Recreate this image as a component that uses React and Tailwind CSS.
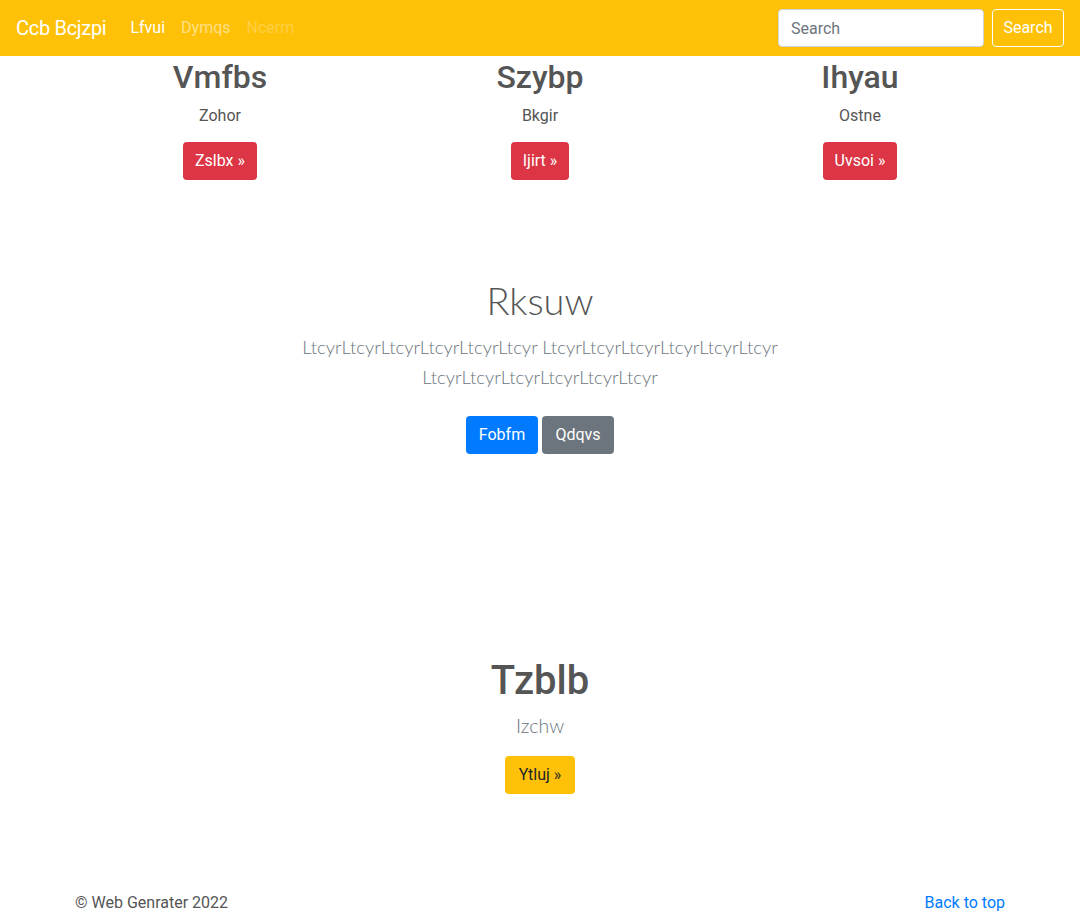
export default function App() {
  return (
    <div className="min-h-[914px] bg-white font-['Roboto','Liberation_Sans',sans-serif] text-[#555]">
      <nav className="flex h-14 items-center bg-[#ffc107] px-4">
        <a className="mr-4 text-[20px] leading-[30px] tracking-[-0.3px] text-white">Ccb Bcjzpi</a>
        <div className="flex items-center">
          <a className="px-2 text-base text-white">Lfvui</a>
          <a className="px-2 text-base text-white/50">Dymqs</a>
          <a className="px-2 text-base text-white/25">Ncerm</a>
        </div>
        <div className="ml-auto flex items-center">
          <input
            placeholder="Search"
            className="h-[38px] w-[206px] rounded border border-[#ced4da] bg-white px-3 text-base text-[#495057] placeholder:text-[#6c757d] outline-none"
          />
          <button className="ml-2 h-[38px] w-[72px] rounded border border-white text-base text-white">Search</button>
        </div>
      </nav>

      <div className="mx-auto w-[960px] px-[15px]">
        <div className="-mx-[15px] grid grid-cols-3 pt-[2px] text-center">
          {[
            ["Vmfbs", "Zohor", "Zslbx »"],
            ["Szybp", "Bkgir", "Ijirt »"],
            ["Ihyau", "Ostne", "Uvsoi »"],
          ].map(([h, p, b]) => (
            <div key={h} className="px-[15px]">
              <h2 className="mb-2 text-[32px] font-medium leading-[38px] text-[#555]">{h}</h2>
              <p className="mb-[14px] text-base leading-6 text-[#555]">{p}</p>
              <button className="h-[38px] rounded bg-[#dc3545] px-3 text-base text-white">{b}</button>
            </div>
          ))}
        </div>

        <section className="mt-[94px] text-center">
          <h1 className="font-['Lato','Roboto',sans-serif] text-[38px] font-light leading-[53px] text-[#555]">Rksuw</h1>
          <p className="mx-auto mt-[5px] max-w-[610px] font-['Lato','Roboto',sans-serif] text-[18.5px] font-light leading-[30px] text-[#6c757d]">
            LtcyrLtcyrLtcyrLtcyrLtcyrLtcyr LtcyrLtcyrLtcyrLtcyrLtcyrLtcyr LtcyrLtcyrLtcyrLtcyrLtcyrLtcyr
          </p>
          <div className="mt-[24px] flex justify-center gap-1">
            <button className="h-[38px] w-[72px] rounded bg-[#007bff] text-base text-white">Fobfm</button>
            <button className="h-[38px] w-[72px] rounded bg-[#6c757d] text-base text-white">Qdqvs</button>
          </div>
        </section>

        <section className="mt-[203px] text-center">
          <h1 className="text-[40px] font-medium leading-[48px] text-[#555]">Tzblb</h1>
          <p className="mt-[6px] font-['Lato','Roboto',sans-serif] text-[19.5px] font-light leading-[30px] text-[#6c757d]">Izchw</p>
          <button className="mt-[15px] h-[38px] w-[70px] rounded bg-[#ffc107] text-base text-[#212529]">Ytluj »</button>
        </section>

        <footer className="mt-[97px] flex justify-between text-base leading-6">
          <p className="text-[#555]">© Web Genrater 2022</p>
          <a className="text-[#007bff]">Back to top</a>
        </footer>
      </div>
    </div>
  );
}
